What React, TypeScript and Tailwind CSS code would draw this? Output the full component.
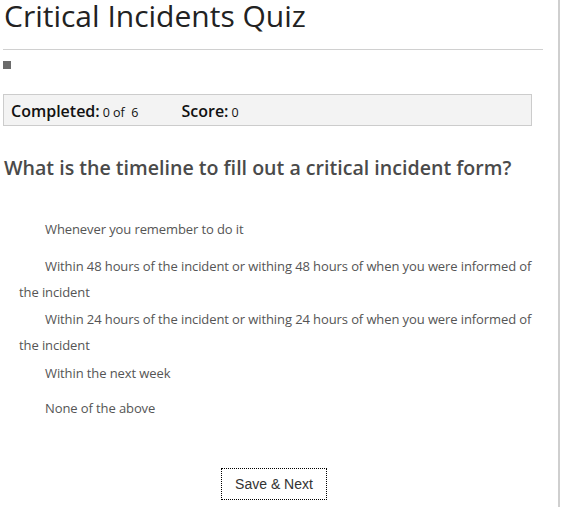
const options = [
  { text: "Whenever you remember to do it", mt: "mt-0" },
  { text: "Within 48 hours of the incident or withing 48 hours of when you were informed of the incident", mt: "mt-[11px]" },
  { text: "Within 24 hours of the incident or withing 24 hours of when you were informed of the incident", mt: "mt-[1px]" },
  { text: "Within the next week", mt: "mt-[2px]" },
  { text: "None of the above", mt: "mt-[9px]" },
];

export default function App() {
  return (
    <div className="relative h-[507px] w-[562px] overflow-hidden bg-white font-['Open_Sans',sans-serif] text-[#333]">
      <div className="absolute right-[2px] top-0 h-full w-[2px] bg-[#cfcfcf]" />

      <div className="w-[558px]">
        <h1 className="pl-[4px] text-[30px] leading-[31px] text-[#222]">Critical Incidents Quiz</h1>

        <div className="ml-[3px] mt-[18px] h-px w-[540px] bg-[#d0d0d0]" />

        <div className="ml-[3px] mt-[11px] h-[8px] w-[8px] bg-[#6b6b6b]" />

        <div className="ml-[3px] mt-[25px] flex h-[32px] w-[529px] items-baseline border border-[#cccccc] bg-[#f3f3f3] pl-[7px] pt-[4px] text-[#111]">
          <span className="text-[16px] font-semibold">Completed:</span>
          <span className="ml-[3px] text-[12.5px]">0 of&nbsp; 6</span>
          <span className="ml-[43px] text-[16px] font-semibold">Score:</span>
          <span className="ml-[3px] text-[12.5px]">0</span>
        </div>

        <h2 className="mt-[29px] pl-[4px] text-[19.6px] font-semibold leading-[26px] text-[#4a4a4a]">
          What is the timeline to fill out a critical incident form?
        </h2>

        <div className="mt-[35px] w-[546px] pl-[19px] text-[13px] leading-[26px] tracking-[-0.1px] text-[#555]">
          {options.map((o) => (
            <p key={o.text} className={`${o.mt} indent-[26px]`}>
              {o.text}
            </p>
          ))}
        </div>

        <div className="mt-[47px] flex justify-center pr-[10px]">
          <button className="h-[32px] w-[106px] border border-dotted border-black bg-white font-['Liberation_Sans',sans-serif] text-[14px] text-[#333]">
            Save &amp; Next
          </button>
        </div>
      </div>
    </div>
  );
}
